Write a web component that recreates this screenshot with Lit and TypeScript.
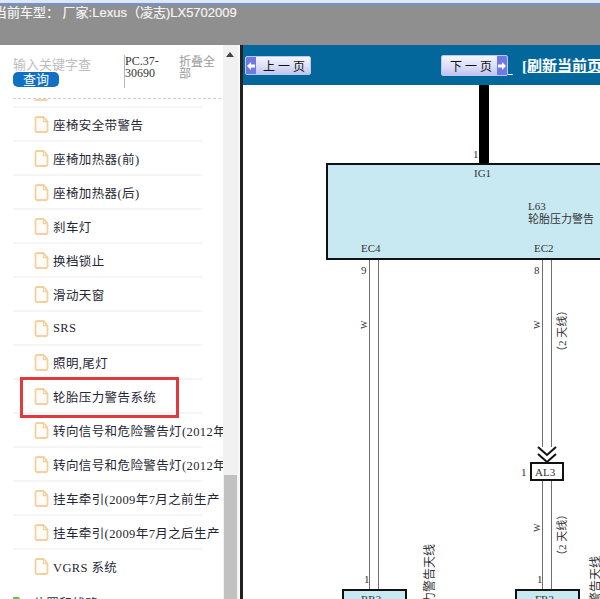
import { LitElement, html, css, svg } from "lit";
import { customElement } from "lit/decorators.js";

const FILE = html`<svg class="file" width="15" height="17" viewBox="0 0 15 17"><path d="M1.5 2.5a1.5 1.5 0 0 1 1.5-1.5h6.5l4 4.5v9a1.5 1.5 0 0 1-1.5 1.5h-9a1.5 1.5 0 0 1-1.5-1.5z" fill="#fffdf9" stroke="#f4d09c" stroke-width="1.8"/><path d="M9.5 1v4.5h4" fill="none" stroke="#f4d09c" stroke-width="1.3"/></svg>`;

const ROWS = [
  "座椅安全带警告",
  "座椅加热器(前)",
  "座椅加热器(后)",
  "刹车灯",
  "换档锁止",
  "滑动天窗",
  "SRS",
  "照明,尾灯",
  "轮胎压力警告系统",
  "转向信号和危险警告灯(2012年",
  "转向信号和危险警告灯(2012年",
  "挂车牵引(2009年7月之前生产",
  "挂车牵引(2009年7月之后生产",
  "VGRS 系统",
];

@customElement("app-root")
export class AppRoot extends LitElement {
  static styles = css`
    :host { display: block; width: 600px; height: 599px; overflow: hidden; position: relative; font-family: "Liberation Serif", "Noto Sans CJK SC", serif; background: #fff; }
    .strip { height: 5px; background: linear-gradient(#dfe6f6 0 3px, #6f93d6 3px 5px); }
    .top { height: 40px; background: #8f8f8f; color: #f4f4f4; font: 13px/16px "Liberation Sans", "Noto Sans CJK SC", sans-serif; white-space: pre; overflow: hidden; margin-left: -6px; -webkit-text-stroke: 0.2px #f4f4f4; }
    .main { display: flex; height: 554px; }
    .left { width: 223px; flex: none; overflow: hidden; position: relative; }
    .search { display: flex; height: 53px; box-sizing: border-box; padding: 10px 0 0 13px; }
    .kw { width: 110px; flex: none; color: #bdbdbd; font-size: 13px; line-height: 16px; position: relative; padding-top: 2px; white-space: nowrap; }
    .btn { position: absolute; left: 0; top: 17px; width: 46px; height: 15px; background: #0f70c4; border-radius: 5px; color: #fff; font-size: 13px; line-height: 15px; text-align: center; }
    .pc { width: 54px; flex: none; box-sizing: border-box; height: 33px; border-left: 1px solid #b5b5b5; margin-left: 1px; font-size: 12px; line-height: 12px; color: #333; }
    .fold { width: 40px; flex: none; margin-left: 1px; padding-top: 1px; color: #9a9a9a; font-size: 12px; line-height: 12px; word-break: break-all; }
    .dash { border-top: 1px dashed #cfcfcf; margin: 0 2px 0 13px; height: 0; position: relative; }
    .stub { position: absolute; left: 21px; top: 0; width: 14px; height: 2px; background: #f4d5a8; border-radius: 0 0 3px 3px; }
    .rows { padding: 7px 0 0 13px; }
    .row { width: 189px; height: 34px; box-sizing: border-box; border-top: 2px solid #f5f5f5; display: flex; align-items: center; gap: 4px; padding-left: 21px; font-size: 12.5px; color: #1f2733; white-space: nowrap; }
    .file { flex: none; }
    .txt { letter-spacing: 0.4px; }
    .mark { position: absolute; left: 20px; top: 332px; width: 159px; height: 41px; border: 3px solid #e23a3c; box-sizing: border-box; }
    .folder { display: flex; align-items: center; gap: 6px; font-size: 13px; color: #2a3340; height: 12px; white-space: nowrap; margin-top: 14px; }
    .scroll { width: 15px; flex: none; background: #f1f1f1; position: relative; }
    .thumb { position: absolute; left: 1px; right: 1px; top: 430px; bottom: 0; background: #c1c1c1; }
    .arrow { position: absolute; left: 3px; top: 7px; width: 0; height: 0; border: 4px solid transparent; border-top: 0; border-bottom: 5px solid #444; }
    .gap { width: 2px; flex: none; background: #f8f8f8; }
    .sep { width: 3px; flex: none; background: #222; }
    .right { flex: 1; min-width: 0; display: flex; flex-direction: column; }
    .nav { height: 40px; background: #04679c; flex: none; display: flex; align-items: flex-start; padding: 11px 0 0 2px; box-sizing: border-box; white-space: nowrap; }
    .pg { width: 66px; height: 19px; box-sizing: border-box; border: 1px solid #b9c9ee; border-radius: 2px; background: linear-gradient(#f4f6fe, #d9dcf6 60%, #bfc4ef); display: flex; align-items: center; font-size: 12px; color: #111; flex: none; overflow: hidden; }
    .ico { width: 10px; align-self: stretch; background: #6f79e3; display: flex; align-items: center; justify-content: center; flex: none; }
    .pg .l { flex: 1; padding-left: 7px; letter-spacing: 3px; }
    .next { margin-left: 130px; margin-top: -1px; width: 67px; height: 21px; }
    .next .l { padding-left: 8px; }
    .ul { border-bottom: 1px solid #fff; width: 5px; height: 18px; flex: none; }
    .refresh { margin-left: 9px; color: #fff; font-weight: bold; font-size: 15px; line-height: 18px; text-decoration: underline; margin-top: 1px; }
    .canvas { flex: 1; min-height: 0; background: #fff; overflow: hidden; }
    .canvas svg { display: block; }
    .d { font-family: "Liberation Serif", "Noto Sans CJK SC", serif; fill: #333; font-size: 11px; }
  `;

  render() {
    return html`
      <div class="strip"></div>
      <div class="top">当前车型： 厂家:Lexus（凌志)LX5702009</div>
      <div class="main">
        <div class="left">
          <div class="search">
            <div class="kw">输入关键字查<div class="btn">查询</div></div>
            <div class="pc">PC.37-<br />30690</div>
            <div class="fold">折叠全部</div>
          </div>
          <div class="dash"><span class="stub"></span></div>
          <div class="rows">
            ${ROWS.map((r) => html`<div class="row">${FILE}<span class="txt">${r}</span></div>`)}
            <div class="folder">
              <svg width="14" height="12" viewBox="0 0 14 12"><path d="M0 1h6l1 2h7v9H0z" fill="#6cbf4b"/></svg>
              <span>位置和线路</span>
            </div>
          </div>
          <div class="mark"></div>
        </div>
        <div class="scroll"><div class="arrow"></div><div class="thumb"></div></div>
        <div class="gap"></div>
        <div class="sep"></div>
        <div class="right">
          <div class="nav">
            <div class="pg">
              <span class="ico"><svg width="8" height="8" viewBox="0 0 8 8"><path d="M4 0v2.5h4v3H4V8L0 4z" fill="#fff"/></svg></span>
              <span class="l">上一页</span>
            </div>
            <div class="pg next">
              <span class="l">下一页</span>
              <span class="ico"><svg width="8" height="8" viewBox="0 0 8 8"><path d="M4 0v2.5H0v3h4V8l4-4z" fill="#fff"/></svg></span>
            </div>
            <span class="ul"></span>
            <span class="refresh">[刷新当前页</span>
          </div>
          <div class="canvas">${this.diagram()}</div>
        </div>
      </div>
    `;
  }

  // The wiring diagram is a free canvas: coordinates are the content.
  diagram() {
    const ox = 243, oy = 85;
    const X = (x: number) => x - ox;
    const Y = (y: number) => y - oy;
    const wire = (x: number, y1: number, y2: number) =>
      svg`<line x1=${X(x) + 0.5} x2=${X(x) + 0.5} y1=${Y(y1)} y2=${Y(y2)} stroke="#6f6f6f" stroke-width="1"/>`;
    const t = (x: number, y: number, s: string, size = 11) =>
      svg`<text class="d" x=${X(x)} y=${Y(y)} style="font-size:${size}px">${s}</text>`;
    const vt = (x: number, y: number, s: string, size = 11) =>
      svg`<text class="d" transform="translate(${X(x)} ${Y(y)}) rotate(-90)" style="font-size:${size}px">${s}</text>`;
    return html`<svg width="357" height="514" viewBox="0 0 357 514">
      <rect x=${X(479)} y="0" width="10" height=${Y(164)} fill="#000" />
      <rect x=${X(327)} y=${Y(164)} width="320" height="95" fill="#c9e9f2" stroke="#111" stroke-width="2" />
      ${t(473, 158, "1")}
      ${t(474, 177, "IG1")}
      ${t(528, 210, "L63")}
      ${t(528, 223, "轮胎压力警告")}
      ${t(361, 252, "EC4")}
      ${t(534, 252, "EC2")}
      ${t(361, 274, "9")}
      ${t(534, 274, "8")}
      ${wire(369, 260, 589)}${wire(378, 260, 589)}
      ${wire(542, 260, 447)}${wire(551, 260, 447)}
      ${vt(367, 329, "W", 9)}
      ${vt(540, 329, "W", 9)}
      ${vt(566, 357, "（2 天线）", 11)}
      <path d="M538 447l9 8 9-8M538 454l9 8 9-8" transform="translate(${-ox} ${-oy})" fill="none" stroke="#111" stroke-width="2" />
      <rect x=${X(531)} y=${Y(463)} width="32" height="17" fill="#fff" stroke="#111" stroke-width="2" />
      ${t(535, 476, "AL3")}
      ${t(521, 476, "1")}
      ${wire(542, 481, 589)}${wire(551, 481, 589)}
      ${vt(540, 532, "W", 9)}
      ${vt(566, 561, "（2 天线）", 11)}
      ${vt(434, 604, "力警告天线", 12)}
      ${vt(600, 604, "警告天线", 12)}
      ${t(364, 583, "1")}
      ${t(537, 583, "1")}
      <rect x=${X(343)} y=${Y(590)} width="63" height="30" fill="#c9e9f2" stroke="#111" stroke-width="2" />
      <rect x=${X(516)} y=${Y(590)} width="63" height="30" fill="#c9e9f2" stroke="#111" stroke-width="2" />
      ${t(361, 603, "RR2")}
      ${t(535, 603, "FR2")}
    </svg>`;
  }
}
